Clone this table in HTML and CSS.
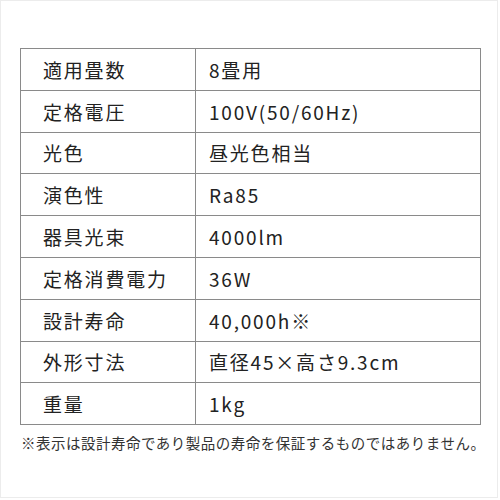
FILE: index.html
```html
<!DOCTYPE html>
<html lang="ja">
<head>
<meta charset="utf-8">
<link rel="stylesheet" href="styles.css">
</head>
<body>
<div class="frame">
  <table class="spec">
    <tr><th>適用畳数</th><td>8畳用</td></tr>
    <tr><th>定格電圧</th><td>100V(50/60Hz)</td></tr>
    <tr><th>光色</th><td>昼光色相当</td></tr>
    <tr><th>演色性</th><td>Ra85</td></tr>
    <tr><th>器具光束</th><td>4000lm</td></tr>
    <tr><th>定格消費電力</th><td>36W</td></tr>
    <tr><th>設計寿命</th><td>40,000h※</td></tr>
    <tr><th>外形寸法</th><td>直径45×高さ9.3cm</td></tr>
    <tr><th>重量</th><td>1kg</td></tr>
  </table>
  <p class="note">※表示は設計寿命であり製品の寿命を保証するものではありません。</p>
</div>
</body>
</html>
```
FILE: styles.css
```css
html, body {
  margin: 0;
  padding: 0;
  background: #ffffff;
}
.frame {
  width: 498px;
  height: 498px;
  border: 1px solid #ececec;
  box-sizing: border-box;
  padding: 47px 0 0 19px;
  font-family: "Noto Sans CJK JP", "Noto Sans", sans-serif;
  color: #222222;
}
.spec {
  border-collapse: collapse;
  width: 461px;
}
.spec th,
.spec td {
  border: 1px solid #8a8a8a;
  height: 40.8px;
  padding: 0;
  font-size: 19px;
  font-weight: 400;
  letter-spacing: 1.8px;
  text-align: left;
  vertical-align: middle;
  line-height: 1;
}
.spec th {
  width: 152px;
  padding-left: 22px;
}
.spec td {
  padding-left: 13px;
}
.note {
  margin: 8px 0 0 1px;
  font-size: 14.5px;
  letter-spacing: 0.5px;
  line-height: 20px;
  color: #333333;
  white-space: nowrap;
}
```
